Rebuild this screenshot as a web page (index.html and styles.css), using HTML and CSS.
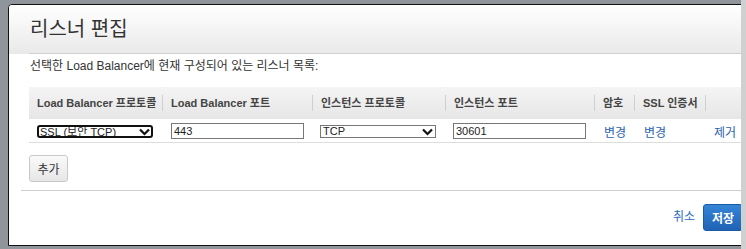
FILE: index.html
```html
<!DOCTYPE html>
<html lang="ko">
<head>
  <meta charset="UTF-8">
  <meta name="viewport" content="width=device-width, initial-scale=1.0">
  <title>리스너 편집</title>
  <link rel="stylesheet" href="styles.css">
</head>
<body>
  <div class="dialog">
    <div class="dialog-header">
      <h2>리스너 편집</h2>
    </div>
    <div class="dialog-body">
      <p class="intro">선택한 Load Balancer에 현재 구성되어 있는 리스너 목록:</p>
      <table class="listeners">
        <colgroup>
          <col style="width: 133px">
          <col style="width: 150px">
          <col style="width: 133px">
          <col style="width: 149px">
          <col style="width: 40px">
          <col style="width: 71px">
          <col>
        </colgroup>
        <thead>
          <tr>
            <th><span class="first">Load Balancer 프로토콜</span></th>
            <th><span>Load Balancer 포트</span></th>
            <th><span>인스턴스 프로토콜</span></th>
            <th><span>인스턴스 포트</span></th>
            <th><span>암호</span></th>
            <th><span>SSL 인증서</span></th>
            <th><span>&nbsp;</span></th>
          </tr>
        </thead>
        <tbody>
          <tr>
            <td class="pad-8">
              <div class="select-wrap focused">
                <select><option>SSL (보안 TCP)</option></select>
                <svg class="chevron" width="11" height="8" viewBox="0 0 11 8"><path d="M1 1.5 L5.5 6 L10 1.5" fill="none" stroke="#111" stroke-width="2.2"/></svg>
              </div>
            </td>
            <td class="pad-9"><input type="text" value="443"></td>
            <td class="pad-8">
              <div class="select-wrap">
                <select><option>TCP</option></select>
                <svg class="chevron" width="11" height="8" viewBox="0 0 11 8"><path d="M1 1.5 L5.5 6 L10 1.5" fill="none" stroke="#111" stroke-width="2.2"/></svg>
              </div>
            </td>
            <td class="pad-8"><input type="text" value="30601"></td>
            <td class="pad-10"><a href="#">변경</a></td>
            <td class="pad-10"><a href="#">변경</a></td>
            <td class="pad-9"><a href="#">제거</a></td>
          </tr>
        </tbody>
      </table>
      <button type="button" class="btn">추가</button>
    </div>
    <div class="dialog-footer">
      <a href="#" class="cancel">취소</a>
      <button type="button" class="btn-primary">저장</button>
    </div>
  </div>
  <div class="scroll-edge"></div>
</body>
</html>
```

FILE: styles.css
```css
html, body {
  height: 100%;
}
body {
  margin: 0;
  padding: 4px 0 0 8px;
  box-sizing: border-box;
  overflow: hidden;
  background: #8f959b;
  font-family: "Liberation Sans", "Noto Sans CJK KR", sans-serif;
  font-size: 12px;
  color: #444;
}
.dialog {
  width: 745px;
  background: #fff;
  border: 1px solid #111;
  border-top-left-radius: 4px;
  overflow: hidden;
}
.dialog-header {
  height: 49px;
  background:
    linear-gradient(#cfcfcf, #cfcfcf) 20px 100% / 100% 1px no-repeat,
    linear-gradient(#ffffff, #e9e9e9);
  padding-left: 21px;
}
.dialog-header h2 {
  margin: 0;
  font-size: 20px;
  font-weight: normal;
  line-height: 48px;
  color: #333;
}
.dialog-body {
  margin-left: 20px;
  padding-top: 4px;
}
.intro {
  margin: 0 0 13px 1px;
  line-height: 16px;
  color: #333;
}
.listeners {
  width: 725px;
  border-collapse: collapse;
  table-layout: fixed;
}
.listeners th {
  height: 32px;
  padding: 0;
  background: linear-gradient(#f4f4f4, #e6e6e6);
  text-align: left;
  font-size: 11px;
  font-weight: bold;
  color: #444;
  border-bottom: 1px solid #fff;
}
.listeners th span {
  display: block;
  border-left: 1px solid #cfcfcf;
  padding-left: 8px;
  line-height: 16px;
  white-space: nowrap;
}
.listeners th span.first {
  border-left: none;
}
.listeners td {
  height: 22px;
  padding: 0;
  border-bottom: 1px solid #ddd;
}
.pad-8 { padding-left: 8px !important; }
.pad-9 { padding-left: 9px !important; }
.pad-10 { padding-left: 10px !important; }
.select-wrap {
  position: relative;
  width: 116px;
  height: 13px;
}
.select-wrap select {
  appearance: none;
  -webkit-appearance: none;
  width: 116px;
  height: 13px;
  margin: 0;
  padding: 0 0 0 2px;
  border: 1px solid #777;
  border-radius: 0;
  background: #fff;
  font-family: "Liberation Sans", "Noto Sans CJK KR", sans-serif;
  font-size: 11px;
  line-height: 11px;
  color: #222;
  box-sizing: border-box;
  display: block;
}
.select-wrap.focused select {
  border: 2px solid #111;
  border-radius: 3px;
  padding-left: 1px;
}
.chevron {
  position: absolute;
  right: 3px;
  top: 3px;
  pointer-events: none;
}
.listeners input {
  width: 133px;
  height: 16px;
  margin: 0;
  padding: 0 2px;
  border: 1px solid #777;
  box-sizing: border-box;
  display: block;
  font-family: "Liberation Sans", "Noto Sans CJK KR", sans-serif;
  font-size: 11px;
  color: #222;
}
.listeners a {
  color: #2a62ad;
  text-decoration: none;
  font-size: 12px;
}
.btn {
  display: block;
  margin: 12px 0 8px 0;
  width: 39px;
  height: 27px;
  padding: 0;
  border: 1px solid #c8c8c8;
  border-radius: 3px;
  background: linear-gradient(#fafafa, #e6e6e6);
  font-family: "Liberation Sans", "Noto Sans CJK KR", sans-serif;
  font-size: 12px;
  color: #333;
}
.dialog-footer {
  margin-left: 12px;
  border-top: 1px solid #cfcfcf;
  height: 55px;
  padding: 13px 11px 0 0;
  box-sizing: border-box;
  display: flex;
  justify-content: flex-end;
  align-items: flex-start;
  gap: 8px;
}
.cancel {
  color: #2e6fbe;
  text-decoration: none;
  font-size: 12px;
  line-height: 27px;
}
.btn-primary {
  width: 40px;
  height: 27px;
  padding: 0;
  border: 1px solid #1b5aa5;
  border-radius: 3px;
  background: linear-gradient(#3584d6, #1f63b5);
  color: #fff;
  font-family: "Liberation Sans", "Noto Sans CJK KR", sans-serif;
  font-size: 12px;
  font-weight: bold;
}
.scroll-edge {
  position: fixed;
  top: 0;
  right: 0;
  width: 5px;
  height: 100%;
  background: #d0d0d0;
}
```
